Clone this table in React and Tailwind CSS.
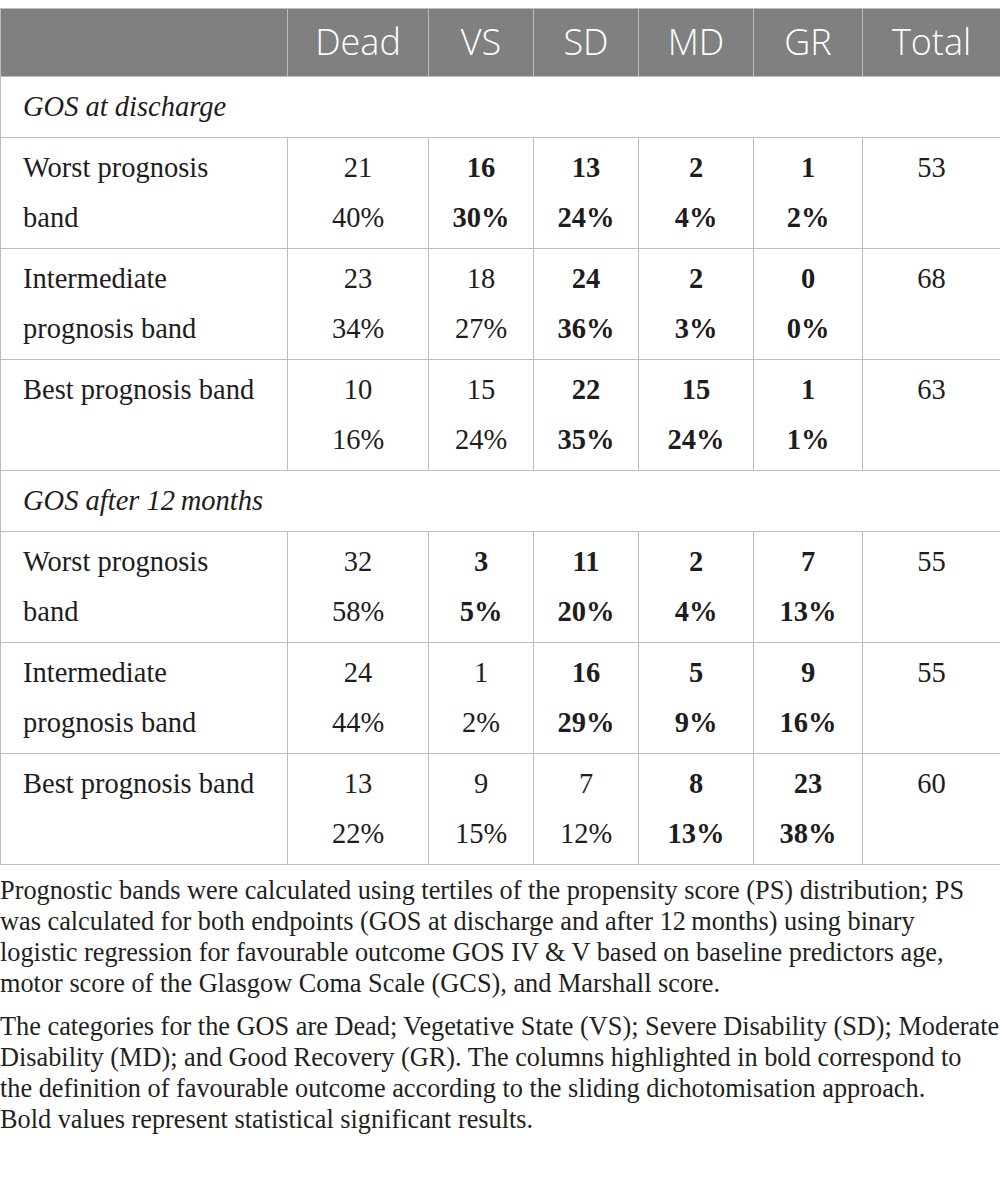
import React from "react"

/* DATA */
const sections = [
  {
    title: "GOS at discharge",
    rows: [
      {
        label: ["Worst prognosis", "band"],
        cells: [
          ["21", "40%", false],
          ["16", "30%", true],
          ["13", "24%", true],
          ["2", "4%", true],
          ["1", "2%", true],
        ],
        total: "53",
      },
      {
        label: ["Intermediate", "prognosis band"],
        cells: [
          ["23", "34%", false],
          ["18", "27%", false],
          ["24", "36%", true],
          ["2", "3%", true],
          ["0", "0%", true],
        ],
        total: "68",
      },
      {
        label: ["Best prognosis band"],
        cells: [
          ["10", "16%", false],
          ["15", "24%", false],
          ["22", "35%", true],
          ["15", "24%", true],
          ["1", "1%", true],
        ],
        total: "63",
      },
    ],
  },
  {
    title: "GOS after 12\u2009months",
    rows: [
      {
        label: ["Worst prognosis", "band"],
        cells: [
          ["32", "58%", false],
          ["3", "5%", true],
          ["11", "20%", true],
          ["2", "4%", true],
          ["7", "13%", true],
        ],
        total: "55",
      },
      {
        label: ["Intermediate", "prognosis band"],
        cells: [
          ["24", "44%", false],
          ["1", "2%", false],
          ["16", "29%", true],
          ["5", "9%", true],
          ["9", "16%", true],
        ],
        total: "55",
      },
      {
        label: ["Best prognosis band"],
        cells: [
          ["13", "22%", false],
          ["9", "15%", false],
          ["7", "12%", false],
          ["8", "13%", true],
          ["23", "38%", true],
        ],
        total: "60",
      },
    ],
  },
]

const headers = ["Dead", "VS", "SD", "MD", "GR", "Total"]

const serif = "font-['Liberation_Serif','Times_New_Roman',serif]"

function App() {
  return (
    <div className={`w-[1000px] bg-white text-[#1f1c1d] ${serif}`}>

      {/* TABLE */}
      <table className="mt-2 w-[1000px] table-fixed border-collapse">
        <colgroup>
          <col className="w-[287px]" />
          <col className="w-[141px]" />
          <col className="w-[105px]" />
          <col className="w-[105px]" />
          <col className="w-[115px]" />
          <col className="w-[109px]" />
          <col className="w-[138px]" />
        </colgroup>

        <thead>
          <tr className="bg-[#7f807f] text-white font-['Open_Sans',sans-serif]">
            <th className="border border-[#bdbdbd] pt-1 pb-[5px]" />
            {headers.map((h) => (
              <th
                key={h}
                className="border border-[#bdbdbd] pt-1 pb-[5px] text-center text-[36px] leading-[58px] font-light"
              >
                {h}
              </th>
            ))}
          </tr>
        </thead>

        <tbody className="text-[28.5px] leading-[50px]">
          {sections.map((section) => (
            <React.Fragment key={section.title}>
              <tr>
                <td colSpan={7} className="border border-[#bdbdbd] py-[5px] pl-[22px] italic">
                  {section.title}
                </td>
              </tr>

              {section.rows.map((row, i) => (
                <tr key={i}>
                  <td className="border border-[#bdbdbd] py-[5px] pl-[22px] align-top">
                    {row.label.map((l) => (
                      <div key={l}>{l}</div>
                    ))}
                  </td>

                  {row.cells.map(([n, p, bold], j) => (
                    <td
                      key={j}
                      className={`border border-[#bdbdbd] py-[5px] text-center align-top ${bold ? "font-bold" : ""}`}
                    >
                      <div>{n}</div>
                      <div>{p}</div>
                    </td>
                  ))}

                  <td className="border border-[#bdbdbd] py-[5px] text-center align-top">
                    {row.total}
                  </td>
                </tr>
              ))}
            </React.Fragment>
          ))}
        </tbody>
      </table>

      {/* FOOTNOTE */}
      <div className="mt-[10px] text-[26.3px] leading-[31px] text-[#231f20] whitespace-nowrap">
        <p>
          Prognostic bands were calculated using tertiles of the propensity score (PS) distribution; PS
          <br />
          was calculated for both endpoints (GOS at discharge and after 12{"\u2009"}months) using binary
          <br />
          logistic regression for favourable outcome GOS IV &amp; V based on baseline predictors age,
          <br />
          motor score of the Glasgow Coma Scale (GCS), and Marshall score.
        </p>
        <p className="mt-3">
          The categories for the GOS are Dead; Vegetative State (VS); Severe Disability (SD); Moderate
          <br />
          Disability (MD); and Good Recovery (GR). The columns highlighted in bold correspond to
          <br />
          the definition of favourable outcome according to the sliding dichotomisation approach.
          <br />
          Bold values represent statistical significant results.
        </p>
      </div>

    </div>
  )
}

export default App
